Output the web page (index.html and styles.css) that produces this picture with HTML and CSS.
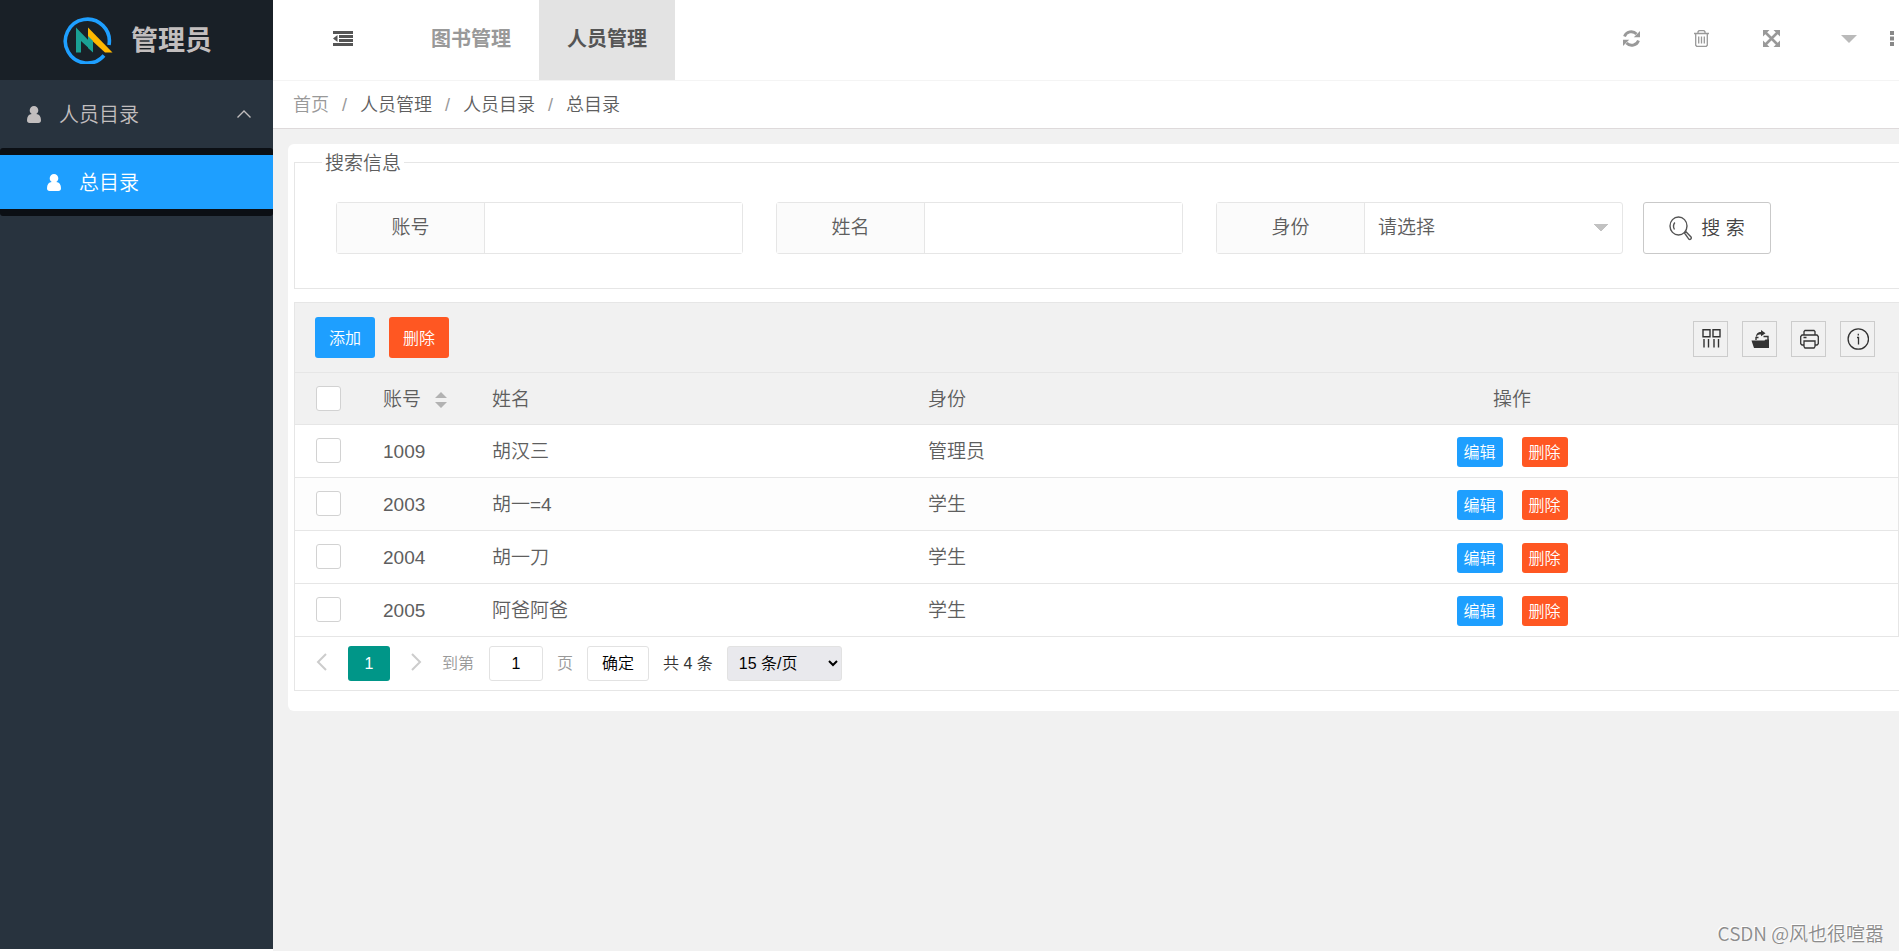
FILE: index.html
```html
<!DOCTYPE html>
<html lang="zh-CN">
<head>
<meta charset="utf-8">
<title>总目录</title>
<link rel="stylesheet" href="styles.css">
</head>
<body>
<div class="app">
  <aside class="sidebar">
    <div class="brand">
      <svg class="brand-logo" viewBox="0 0 50 48" aria-hidden="true">
        <path d="M46 29A22 22 0 1 0 41 39.500" fill="none" stroke="#1e9fff" stroke-width="3.600"/>
        <path d="M13 11.500L30 29V36L18 25V36.500H13Z" fill="#1aa094"/>
        <path d="M25 11.500L49.500 36.500H42L25 21Z" fill="#ffb800"/>
        <path d="M25 20L30 25V36.500L25 32Z" fill="#1aa094"/>
      </svg>
      <span>管理员</span>
    </div>
    <nav class="menu">
      <a class="menu-parent" href="#">
        <svg class="user-icon" viewBox="0 0 14 17"><path d="M7 0a4.300 4.300 0 0 1 4.300 4.300c0 1.700-.8 3-2 3.800C12.300 8.300 14 10.500 14 14.300 14 16 13 17 11.500 17h-9C1 17 0 16 0 14.300 0 10.500 1.700 8.300 4.700 8.100 3.500 7.300 2.700 6 2.700 4.300A4.300 4.300 0 0 1 7 0z"/></svg>
        <span class="menu-text">人员目录</span>
        <svg class="chevron" viewBox="0 0 14 8"><path d="M.5 7.500L7 1l6.500 6.500"/></svg>
      </a>
      <div class="submenu">
        <a class="menu-child" href="#">
          <svg class="user-icon" viewBox="0 0 14 17"><path d="M7 0a4.300 4.300 0 0 1 4.300 4.300c0 1.700-.8 3-2 3.800C12.300 8.300 14 10.500 14 14.300 14 16 13 17 11.500 17h-9C1 17 0 16 0 14.300 0 10.500 1.700 8.300 4.700 8.100 3.500 7.300 2.700 6 2.700 4.300A4.300 4.300 0 0 1 7 0z"/></svg>
          <span class="menu-text">总目录</span>
        </a>
      </div>
    </nav>
  </aside>

  <div class="main">
    <header class="topbar">
      <button class="fold" type="button" aria-label="收起菜单">
        <svg viewBox="0 0 20 15"><path d="M0 0h20v3H0zM6 4h14v3H6zM6 8h14v3H6zM0 12h20v3H0zM4.500 4v7L0 7.500z"/></svg>
      </button>
      <a class="tab" href="#">图书管理</a>
      <a class="tab tab-active" href="#">人员管理</a>
      <div class="tools">
        <button type="button" aria-label="刷新"><svg class="i17" viewBox="0 0 17 17"><path d="M1.500 6.500A7 6.500 0 0 1 13.500 4M15.500 10.500A7 6.500 0 0 1 3.500 13" fill="none" stroke="#999" stroke-width="2.800"/><path d="M17 1v6.200h-6.200zM0 16V9.800h6.200z" fill="#999"/></svg></button>
        <button type="button" aria-label="清理"><svg class="i17" viewBox="0 0 17 17"><path d="M1 3.500h15M5 3.500V1.800L6 .7h5l1 1.100v1.700M2.700 4v11.300l1 1h9.600l1-1V4M5.700 6.500v7M8.500 6.500v7M11.300 6.500v7" fill="none" stroke="#999" stroke-width="1.300"/></svg></button>
        <button type="button" aria-label="全屏"><svg class="i17" viewBox="0 0 17 17"><path d="M2.500 2.500l12 12M14.500 2.500l-12 12" stroke="#999" stroke-width="2.600"/><path d="M0 0h6.500L0 6.500zM17 0v6.500L10.500 0zM0 17v-6.500L6.500 17zM17 17h-6.500l6.500-6.500z" fill="#999"/></svg></button>
        <button class="user-drop" type="button" aria-label="用户菜单"><svg class="caret" viewBox="0 0 16 8"><path d="M0 0h16L8 8z" fill="#bababa"/></svg></button>
        <button class="more" type="button" aria-label="更多"><svg viewBox="0 0 4 15"><path d="M0 0h4v4H0zM0 5.500h4v4H0zM0 11h4v4H0z" fill="#888"/></svg></button>
      </div>
    </header>

    <nav class="crumbs">
      <a class="crumb-home" href="#">首页</a><i>/</i><a href="#">人员管理</a><i>/</i><a href="#">人员目录</a><i>/</i><a href="#">总目录</a>
    </nav>

    <main class="card">
      <fieldset class="search">
        <legend>搜索信息</legend>
        <form class="search-form">
          <div class="field"><label for="account">账号</label><input id="account" type="text"></div>
          <div class="field"><label for="name">姓名</label><input id="name" type="text"></div>
          <div class="field field-select"><label for="role">身份</label><select id="role"><option>请选择</option></select></div>
          <button class="search-btn" type="button">
            <svg viewBox="0 0 23 25"><g fill="none" stroke="#555" stroke-width="1.400"><ellipse cx="9.500" cy="10" rx="8.500" ry="9"/><path d="M5.500 13.500a5.500 6 0 0 1 .3-7"/><path d="M15.500 17l1.500-1.300 5 5.200c1 1.500-.7 3.200-2.200 2.200z"/></g></svg>
            <span>搜 索</span>
          </button>
        </form>
      </fieldset>

      <section class="panel">
        <div class="toolbar">
          <button class="btn blue" type="button">添加</button>
          <button class="btn orange" type="button">删除</button>
          <div class="table-tools">
            <button type="button" aria-label="筛选列"><svg viewBox="0 0 22 22"><g fill="none" stroke="#333" stroke-width="1.400"><path d="M3 1.700h7v7H3zM13 1.700h7v7h-7zM4 11v8.500M8.500 11v8.500M14 11v8.500M18.500 11v8.500"/></g></svg></button>
            <button type="button" aria-label="导出"><svg viewBox="0 0 22 22"><path d="M2.500 12.500h13l1-1H20V20H5z" fill="#333"/><path d="M7 12V9.500h2.500M14.500 8.500h4.500v4" fill="none" stroke="#333" stroke-width="1.400"/><path d="M7 9.500c0-4 2-5.500 5-5.500V2l4.500 3.200-4.500 3V6.500C9.500 6.500 8 7 7 9.500z" fill="#333"/></svg></button>
            <button type="button" aria-label="打印"><svg viewBox="0 0 22 22"><g fill="none" stroke="#333" stroke-width="1.300"><path d="M6 7V3.500L7 2.500h9l1 1V7M6 17H4l-1.300-1.200V8.500L4 7h15l1.300 1.500v7.300L19 17h-2M6 13h11v5.500L16 20H7l-1-1.500zM5.500 9.500h3"/></g></svg></button>
            <button type="button" aria-label="提示"><svg viewBox="0 0 22 22"><g fill="none" stroke="#333" stroke-width="1.300"><circle cx="11.300" cy="11" r="10.200"/><path d="M10 9.500h1.500v7M11.300 5.800v1.800"/></g></svg></button>
          </div>
        </div>

        <table class="grid">
          <colgroup><col class="c-check"><col class="c-id"><col class="c-wide"><col class="c-wide"><col class="c-op"><col></colgroup>
          <thead>
            <tr><th><input type="checkbox" aria-label="全选"></th><th>账号<svg class="sort" viewBox="0 0 12 16"><path d="M6 0l6 6H0zM0 10h12l-6 6z" fill="#b2b2b2"/></svg></th><th>姓名</th><th>身份</th><th class="center">操作</th><th></th></tr>
          </thead>
          <tbody>
            <tr><td><input type="checkbox" aria-label="选择 1009"></td><td>1009</td><td>胡汉三</td><td>管理员</td><td class="center"><div class="ops"><button class="mini blue" type="button">编辑</button><button class="mini orange" type="button">删除</button></div></td><td></td></tr>
            <tr class="tint"><td><input type="checkbox" aria-label="选择 2003"></td><td>2003</td><td>胡一=4</td><td>学生</td><td class="center"><div class="ops"><button class="mini blue" type="button">编辑</button><button class="mini orange" type="button">删除</button></div></td><td></td></tr>
            <tr><td><input type="checkbox" aria-label="选择 2004"></td><td>2004</td><td>胡一刀</td><td>学生</td><td class="center"><div class="ops"><button class="mini blue" type="button">编辑</button><button class="mini orange" type="button">删除</button></div></td><td></td></tr>
            <tr><td><input type="checkbox" aria-label="选择 2005"></td><td>2005</td><td>阿爸阿爸</td><td>学生</td><td class="center"><div class="ops"><button class="mini blue" type="button">编辑</button><button class="mini orange" type="button">删除</button></div></td><td></td></tr>
          </tbody>
        </table>

        <div class="pager">
          <button class="arrow" type="button" aria-label="上一页"><svg viewBox="0 0 11 18"><path d="M10 1L2 9l8 8"/></svg></button>
          <button class="page-now" type="button">1</button>
          <button class="arrow arrow-next" type="button" aria-label="下一页"><svg viewBox="0 0 11 18"><path d="M1 1l8 8-8 8"/></svg></button>
          <label class="muted" for="page">到第</label>
          <input id="page" class="page-input" type="text" value="1">
          <span class="muted">页</span>
          <button class="confirm" type="button">确定</button>
          <span class="total">共 4 条</span>
          <select class="limit" aria-label="每页条数"><option>15 条/页</option></select>
        </div>
      </section>
    </main>
    <div class="watermark">CSDN @风也很喧嚣</div>
  </div>
</div>
</body>
</html>
```
FILE: styles.css
```css
* { box-sizing: border-box; }

body {
  margin: 0;
  background: #fff;
  color: #5e5e5e;
  font: 19px/24px "Liberation Sans", "Noto Sans CJK SC", sans-serif;
  font-weight: 350;
}

a { color: inherit; text-decoration: none; }
button, input, select { font: inherit; color: inherit; margin: 0; }
button { padding: 0; border: 0; background: none; cursor: pointer; }
svg { display: block; flex: none; }

.app { display: flex; min-height: 100vh; }

.sidebar {
  flex: none;
  width: 273px;
  margin-bottom: 2px;
  background: #28333e;
  color: #c2bebe;
}
.brand {
  display: flex;
  align-items: center;
  gap: 18px;
  height: 80px;
  padding-left: 63px;
  background: #192027;
  font-size: 27px;
  font-weight: 700;
}
.brand span { padding-top: 2px; }
.brand-logo { width: 50px; height: 48px; }
.menu-parent, .menu-child { display: flex; align-items: center; font-size: 20px; }
.menu-parent { height: 68px; padding: 0 22px 0 27px; }
.user-icon { width: 14px; height: 17px; margin-right: 18px; fill: currentColor; }
.menu-text { padding-top: 1px; }
.chevron {
  width: 14px;
  height: 8px;
  margin-left: auto;
  fill: none;
  stroke: currentColor;
  stroke-width: 1.4px;
  overflow: visible;
}
.submenu { padding: 7px 0; border-radius: 3px; background: #0b0f14; }
.menu-child { height: 54px; padding-left: 47px; background: #1e9fff; color: #fff; }

.main {
  flex: 1;
  min-width: 0;
  display: flex;
  flex-direction: column;
  background: #f1f1f1;
}

.topbar {
  display: flex;
  height: 81px;
  border-bottom: 1px solid #f4f4f4;
  background: #fff;
}
.fold { width: 130px; padding: 0 50px 3px 60px; }
.fold svg { width: 20px; height: 15px; fill: #555; }
.tab {
  width: 136px;
  line-height: 79px;
  text-align: center;
  font-size: 20px;
  font-weight: 700;
  color: #999;
}
.tab-active { background: #e3e3e3; color: #555; }
.tools { display: flex; align-items: center; margin-left: auto; height: 77px; }
.tools button { display: flex; justify-content: center; width: 70px; }
.tools .user-drop { margin-left: 8px; }
.tools .more { width: 15px; }
.i17 { width: 17px; height: 17px; }
.caret { width: 16px; height: 8px; }
.more svg { width: 4px; height: 15px; }

.crumbs {
  height: 48px;
  padding-left: 20px;
  border-bottom: 1px solid #dedadb;
  background: #fff;
  font-size: 18px;
  line-height: 49px;
}
.crumbs i { margin: 0 13px; font-style: normal; color: #999; }
.crumbs .crumb-home { color: #999; }

.card {
  margin: 15px 0 0 15px;
  padding: 6px 0 20px 6px;
  border-radius: 6px 0 0 6px;
  background: #fff;
}

.search {
  min-width: 0;
  margin: 0 0 13px;
  padding: 28px 0 34px 41px;
  border: 1px solid #e6e6e6;
  border-right: 0;
}
.search legend { margin-left: -14px; padding: 4px 3px 0; line-height: 20px; }
.search-form { display: flex; }
.field {
  display: flex;
  width: 407px;
  height: 52px;
  margin-right: 33px;
  border: 1px solid #e6e6e6;
  border-radius: 3px;
}
.field-select { margin-right: 20px; }
.field label {
  flex: none;
  width: 148px;
  border-right: 1px solid #e6e6e6;
  background: #fbfbfb;
  line-height: 50px;
  text-align: center;
}
.field input, .field select {
  flex: 1;
  min-width: 0;
  border: 0;
  background: #fff;
  outline: 0;
}
.field select {
  appearance: none;
  padding: 0 0 0 13px;
  background: linear-gradient(to bottom left, #c2c2c2 50%, transparent 50%) no-repeat right 21px center / 8px 8px,
    linear-gradient(to bottom right, #c2c2c2 50%, transparent 50%) no-repeat right 13px center / 8px 8px;
}
.search-btn {
  display: flex;
  align-items: center;
  justify-content: center;
  gap: 9px;
  width: 128px;
  border: 1px solid #c9c9c9;
  border-radius: 3px;
  color: #444;
}
.search-btn svg { width: 23px; height: 25px; }
.search-btn span { padding-top: 2px; }

.panel { border: 1px solid #e6e6e6; border-right: 0; }
.toolbar {
  display: flex;
  align-items: flex-start;
  gap: 14px;
  height: 69px;
  padding: 14px 24px 0 20px;
  background: #f1f1f1;
}
.btn { width: 60px; height: 41px; padding-top: 2px; border-radius: 3px; color: #fff; font-size: 16px; }
.blue { background: #1e9fff; }
.orange { background: #ff5722; }
.table-tools { display: flex; gap: 14px; margin: 4px 0 0 auto; }
.table-tools button {
  display: flex;
  align-items: center;
  justify-content: center;
  width: 35px;
  height: 36px;
  border: 1px solid #ccc;
}
.table-tools svg { width: 22px; height: 22px; }

.grid {
  width: 100%;
  border-collapse: collapse;
  table-layout: fixed;
  border-right: 1px solid #e6e6e6;
}
.c-check { width: 69px; }
.c-id { width: 109px; }
.c-wide { width: 436px; }
.c-op { width: 334px; }
.grid th, .grid td {
  height: 53px;
  padding: 2px 19px 0;
  border-top: 1px solid #e6e6e6;
  border-bottom: 1px solid #e6e6e6;
  font-weight: inherit;
  text-align: left;
  white-space: nowrap;
}
.grid th { height: 52px; background: #f1f1f1; }
.grid .center { text-align: center; }
.tint { background: #fdfdfd; }
.grid input {
  appearance: none;
  display: block;
  width: 25px;
  height: 25px;
  margin: 0 0 3px 2px;
  border: 1px solid #d2d2d2;
  border-radius: 3px;
  background: #fff;
}
.sort { display: inline-block; width: 12px; height: 16px; margin-left: 14px; vertical-align: -2px; }
.ops { display: flex; justify-content: center; gap: 19px; }
.mini { width: 46px; height: 30px; padding-top: 1px; border-radius: 3px; color: #fff; font-size: 16px; }

.pager {
  display: flex;
  align-items: center;
  height: 53px;
  padding-left: 21px;
  font-size: 16px;
}
.arrow svg { width: 11px; height: 18px; margin-bottom: 3px; fill: none; stroke: #ccc; stroke-width: 2px; }
.page-now {
  width: 42px;
  height: 35px;
  margin: 0 21px;
  border-radius: 3px;
  background: #009688;
  color: #fff;
}
.arrow-next { margin-right: 20px; }
.muted { color: #999; }
.page-input {
  width: 54px;
  height: 35px;
  margin: 0 14px 0 15px;
  padding: 0;
  border: 1px solid #e2e2e2;
  border-radius: 3px;
  color: #000;
  text-align: center;
}
.confirm {
  width: 62px;
  height: 35px;
  margin: 0 14px;
  border: 1px solid #e2e2e2;
  border-radius: 3px;
  color: #000;
}
.total { margin-right: 14px; color: #333; }
.limit {
  width: 115px;
  height: 35px;
  padding-left: 7px;
  border: 1px solid #e2e2e2;
  border-radius: 3px;
  background: #e9e9ed;
  color: #000;
}

.watermark {
  margin: auto 15px 6px auto;
  color: #8c8c8c;
  font-family: "Noto Sans CJK SC", sans-serif;
  text-shadow: -1px -1px 0 #fff;
}
```
